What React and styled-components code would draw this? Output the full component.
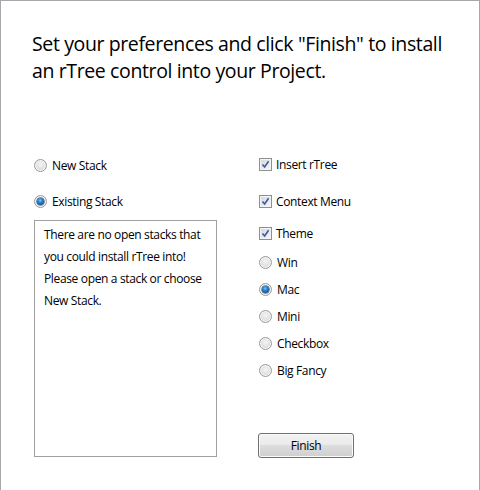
import React from "react";
import styled, { createGlobalStyle } from "styled-components";

const GlobalStyle = createGlobalStyle`
  html, body {
    margin: 0;
    padding: 0;
    background: #ffffff;
  }
  body {
    font-family: "Open Sans", "Noto Sans", sans-serif;
    color: #000000;
  }
`;

const Window = styled.div`
  box-sizing: border-box;
  width: 480px;
  height: 490px;
  border: 1px solid #a7a7ab;
  border-bottom: none;
  background: #ffffff;
  overflow: hidden;
`;

const Heading = styled.h1`
  margin: 0;
  padding: 29px 0 0 31px;
  font-size: 19.5px;
  font-weight: 400;
  line-height: 27px;
  letter-spacing: -0.38px;
  color: #000000;
`;

const Columns = styled.div`
  display: flex;
  margin-top: 74px;
`;

const LeftColumn = styled.div`
  display: flex;
  flex-direction: column;
  width: 183px;
  margin-left: 33px;
`;

const RightColumn = styled.div`
  display: flex;
  flex-direction: column;
  margin-left: 42px;
`;

const Row = styled.label`
  display: flex;
  align-items: center;
  height: 13px;
  margin-top: ${(p) => p.$space || 0}px;
  font-size: 12px;
  line-height: 13px;
  letter-spacing: -0.35px;
  white-space: nowrap;
`;

const Label = styled.span`
  margin-left: ${(p) => (p.$check ? 4 : 5)}px;
`;

const Radio = styled.span`
  box-sizing: border-box;
  position: relative;
  flex: none;
  width: 13px;
  height: 13px;
  border-radius: 50%;
  border: 1px solid #9a9a9a;
  background: radial-gradient(circle at 50% 40%, #f4f4f4 0%, #e0e0e0 55%, #cfcfcf 100%);
  box-shadow: inset 0 0 0 1px #f7f7f7;

  &::after {
    content: "";
    display: ${(p) => (p.$on ? "block" : "none")};
    position: absolute;
    left: 2px;
    top: 2px;
    width: 7px;
    height: 7px;
    border-radius: 50%;
    background: radial-gradient(circle at 45% 35%, #7cc6f7 0%, #1f7bc8 40%, #0a3f7e 100%);
    box-shadow: 0 0 0 0.5px #163659;
  }
`;

const Check = styled.span`
  box-sizing: border-box;
  flex: none;
  display: flex;
  align-items: center;
  justify-content: center;
  width: 13px;
  height: 13px;
  border: 1px solid #8f8f8f;
  background: linear-gradient(135deg, #d3d6dc 0%, #e9eaee 60%, #f6f6f6 100%);
  box-shadow: inset 0 0 0 1px #f4f4f4;
`;

const Notice = styled.div`
  box-sizing: border-box;
  height: 237px;
  margin-top: 12px;
  padding: 3px 6px 0 9px;
  border: 1px solid #a0a0a0;
  font-size: 12px;
  line-height: 22px;
  letter-spacing: -0.35px;
`;

const FinishButton = styled.button`
  box-sizing: border-box;
  width: 96px;
  height: 25px;
  margin-top: 56px;
  margin-left: -1px;
  padding: 0;
  border: 1px solid #707070;
  border-radius: 3px;
  background: linear-gradient(#f2f2f2 0%, #ebebeb 45%, #dddddd 50%, #cfcfcf 100%);
  box-shadow: inset 0 0 0 1px #fbfbfb;
  font-family: inherit;
  font-size: 12px;
  letter-spacing: -0.35px;
  color: #000000;
`;

function CheckMark() {
  return (
    <svg width="9" height="9" viewBox="0 0 9 9">
      <path d="M1.5 4.5 L3.6 7 L7.6 1.2" fill="none" stroke="#3d5a9c" strokeWidth="1.6" />
    </svg>
  );
}

function RadioRow({ on, space, children }) {
  return (
    <Row $space={space}>
      <Radio $on={on} />
      <Label>{children}</Label>
    </Row>
  );
}

function CheckRow({ space, children }) {
  return (
    <Row $space={space}>
      <Check>
        <CheckMark />
      </Check>
      <Label $check>{children}</Label>
    </Row>
  );
}

export default function App() {
  return (
    <>
      <GlobalStyle />
      <Window>
        <Heading>
          Set your preferences and click "Finish" to install
          <br />
          an rTree control into your Project.
        </Heading>
        <Columns>
          <LeftColumn>
            <RadioRow space={1}>New Stack</RadioRow>
            <RadioRow on space={23}>
              Existing Stack
            </RadioRow>
            <Notice>
              There are no open stacks that you could install rTree into! Please
              open a stack or choose New Stack.
            </Notice>
          </LeftColumn>
          <RightColumn>
            <CheckRow>Insert rTree</CheckRow>
            <CheckRow space={24}>Context Menu</CheckRow>
            <CheckRow space={19}>Theme</CheckRow>
            <RadioRow space={16}>Win</RadioRow>
            <RadioRow on space={14}>
              Mac
            </RadioRow>
            <RadioRow space={14}>Mini</RadioRow>
            <RadioRow space={14}>Checkbox</RadioRow>
            <RadioRow space={14}>Big Fancy</RadioRow>
            <FinishButton>Finish</FinishButton>
          </RightColumn>
        </Columns>
      </Window>
    </>
  );
}
